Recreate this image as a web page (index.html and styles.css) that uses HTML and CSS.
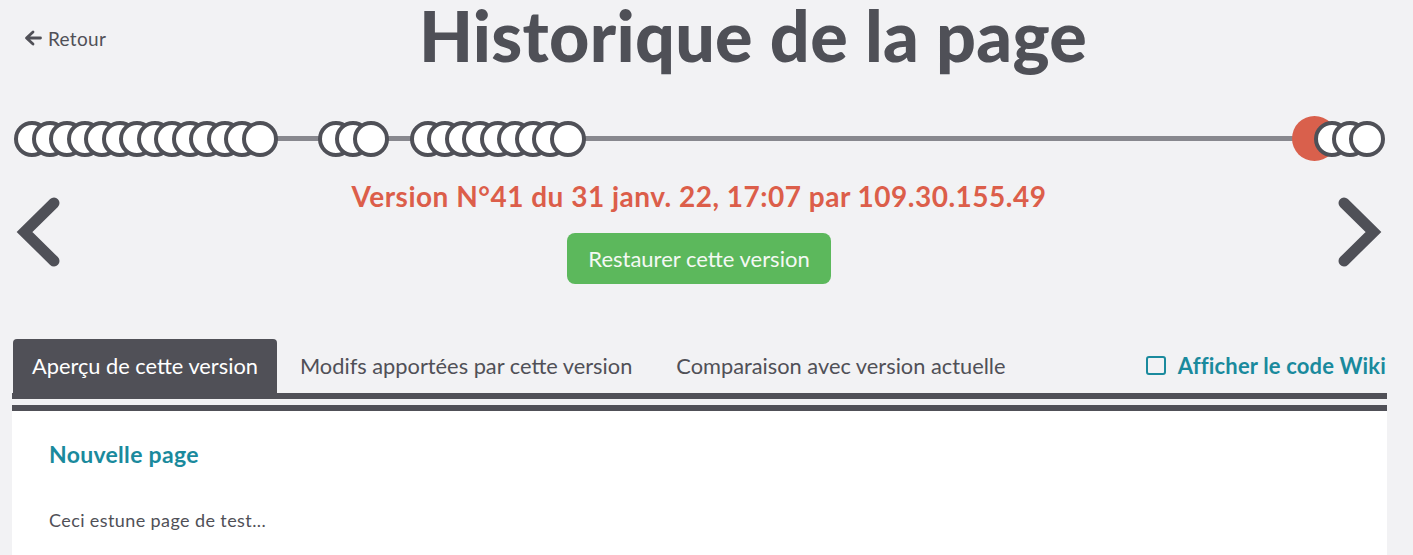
FILE: index.html
```html
<!DOCTYPE html>
<html lang="fr">
<head>
<meta charset="utf-8">
<title>Historique de la page</title>
<link rel="stylesheet" href="styles.css">
</head>
<body>
<header class="top">
  <a class="back" href="#">
    <svg class="back-icon" viewBox="0 0 18 16" width="18" height="16"><path d="M16.5 8H3M9 2L2.5 8l6.5 6" fill="none" stroke="currentColor" stroke-width="2.8" stroke-linecap="round" stroke-linejoin="round"/></svg>
    Retour
  </a>
  <h1 class="title">Historique de la page</h1>
</header>

<div class="timeline">
  <div class="group">
    <span class="dot"></span><span class="dot"></span><span class="dot"></span><span class="dot"></span><span class="dot"></span><span class="dot"></span><span class="dot"></span><span class="dot"></span><span class="dot"></span><span class="dot"></span><span class="dot"></span><span class="dot"></span><span class="dot"></span><span class="dot"></span>
  </div>
  <div class="group g2">
    <span class="dot"></span><span class="dot"></span><span class="dot"></span>
  </div>
  <div class="group g3">
    <span class="dot"></span><span class="dot"></span><span class="dot"></span><span class="dot"></span><span class="dot"></span><span class="dot"></span><span class="dot"></span><span class="dot"></span><span class="dot"></span>
  </div>
  <div class="spacer"></div>
  <span class="current"></span>
  <div class="group">
    <span class="dot"></span><span class="dot"></span><span class="dot"></span>
  </div>
</div>

<section class="nav">
  <svg class="chevron" viewBox="0 0 44 72" width="44" height="72"><polyline points="38,7 8.5,36 38,65" fill="none" stroke="currentColor" stroke-width="11" stroke-linecap="round" stroke-linejoin="miter"/></svg>
  <div class="center">
    <p class="version">Version N°41 du 31 janv. 22, 17:07 par 109.30.155.49</p>
    <button class="restore" type="button">Restaurer cette version</button>
  </div>
  <svg class="chevron" viewBox="0 0 44 72" width="44" height="72"><polyline points="6,7 35.5,36 6,65" fill="none" stroke="currentColor" stroke-width="11" stroke-linecap="round" stroke-linejoin="miter"/></svg>
</section>

<div class="tabs-row">
  <ul class="tabs">
    <li class="tab active">Aperçu de cette version</li>
    <li class="tab">Modifs apportées par cette version</li>
    <li class="tab">Comparaison avec version actuelle</li>
  </ul>
  <label class="wiki"><span class="box"></span>Afficher le code Wiki</label>
</div>
<div class="rule"></div>

<main class="content">
  <h2 class="page-title">Nouvelle page</h2>
  <p class="page-text">Ceci estune page de test...</p>
</main>
</body>
</html>
```

FILE: styles.css
```css
* { box-sizing: border-box; }

html, body {
  margin: 0;
  padding: 0;
  background: #f2f2f4;
  font-family: Lato, "Noto Sans", "DejaVu Sans", sans-serif;
  color: #505057;
  overflow: hidden;
}

.top {
  display: flex;
  align-items: flex-start;
  height: 76px;
  padding: 0 27px 0 24px;
}

.back {
  align-self: center;
  width: 96px;
  display: flex;
  align-items: center;
  gap: 6px;
  color: #505057;
  text-decoration: none;
  font-size: 19px;
  letter-spacing: 0.3px;
}

.back-icon { display: block; }

.title {
  flex: 1;
  margin: 0;
  text-align: center;
  font-size: 70px;
  font-weight: 900;
  letter-spacing: 0.3px;
  line-height: 70px;
  color: #4f5057;
}

/* timeline */
.timeline {
  position: relative;
  display: flex;
  align-items: center;
  height: 45px;
  margin: 40px 28px 0 14px;
}

.timeline::before {
  content: "";
  position: absolute;
  left: 2px;
  right: 2px;
  top: 50%;
  height: 5px;
  margin-top: -2.5px;
  background: #88888e;
}

.group {
  position: relative;
  display: flex;
}

.g2 { margin-left: 40px; }
.g3 { margin-left: 21px; }
.spacer { flex: 1; }

.dot {
  width: 36px;
  height: 36px;
  border-radius: 50%;
  background: #fff;
  border: 4px solid #4f5057;
  flex: none;
}

.dot + .dot { margin-left: -18.5px; }

.current {
  position: relative;
  width: 45px;
  height: 45px;
  border-radius: 50%;
  background: #d9604c;
  margin-right: -23px;
  flex: none;
}

/* nav */
.nav {
  display: flex;
  align-items: flex-start;
  padding: 0 31px 0 16px;
}

.chevron {
  display: block;
  color: #4f5057;
  margin-top: 35px;
  flex: none;
}

.center {
  flex: 1;
  display: flex;
  flex-direction: column;
  align-items: center;
}

.version {
  margin: 16px 0 0;
  font-size: 28px;
  font-weight: 700;
  letter-spacing: 0.5px;
  line-height: 38px;
  color: #dc5e4a;
}

.restore {
  margin-top: 18px;
  width: 264px;
  height: 51px;
  border: none;
  border-radius: 8px;
  background: #5cb85c;
  color: #f4f8f4;
  font-family: inherit;
  font-size: 22px;
  cursor: pointer;
}

/* tabs */
.tabs-row {
  display: flex;
  align-items: stretch;
  justify-content: space-between;
  margin: 55px 27px 0 13px;
  height: 54px;
}

.tabs {
  display: flex;
  margin: 0;
  padding: 0;
  list-style: none;
}

.tab {
  padding: 0 19px;
  font-size: 21.8px;
  line-height: 53px;
  color: #505057;
  white-space: nowrap;
}

.tab.active {
  background: #505057;
  color: #fff;
  border-radius: 4px 4px 0 0;
}

.tab + .tab { padding: 0 21px 0 23px; }

.wiki {
  display: flex;
  align-items: center;
  gap: 12px;
  padding-bottom: 2px;
  color: #1a8a9d;
  font-weight: 700;
  font-size: 22px;
  letter-spacing: 0.15px;
}

.box {
  width: 20px;
  height: 19px;
  border: 2px solid #1a8a9d;
  border-radius: 3px;
  background: #f2f2f4;
}

.rule {
  height: 6px;
  margin: 0 26px 0 12px;
  background: #505057;
}

.content {
  margin: 6px 26px 0 12px;
  border-top: 6px solid #505057;
  background: #fff;
  padding: 28px 37px 40px;
  min-height: 200px;
}

.page-title {
  margin: 0;
  font-size: 23px;
  font-weight: 700;
  letter-spacing: 0.3px;
  line-height: 30px;
  color: #1a8a9d;
}

.page-text {
  margin: 41px 0 0;
  font-size: 18px;
  letter-spacing: 0.4px;
  line-height: 21.6px;
  color: #505057;
}
```
